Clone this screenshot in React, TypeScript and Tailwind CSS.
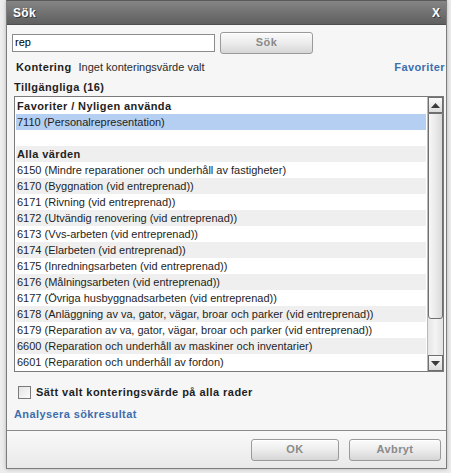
import React from "react";

const rows: { text: string; kind: "header" | "sel" | "empty" | "item"; bg: string }[] = [
  { text: "Favoriter / Nyligen använda", kind: "header", bg: "bg-white" },
  { text: "7110 (Personalrepresentation)", kind: "sel", bg: "bg-[#b4cff1]" },
  { text: "", kind: "empty", bg: "bg-white" },
  { text: "Alla värden", kind: "header", bg: "bg-[#efefef]" },
  { text: "6150 (Mindre reparationer och underhåll av fastigheter)", kind: "item", bg: "bg-white" },
  { text: "6170 (Byggnation (vid entreprenad))", kind: "item", bg: "bg-[#efefef]" },
  { text: "6171 (Rivning (vid entreprenad))", kind: "item", bg: "bg-white" },
  { text: "6172 (Utvändig renovering (vid entreprenad))", kind: "item", bg: "bg-[#efefef]" },
  { text: "6173 (Vvs-arbeten (vid entreprenad))", kind: "item", bg: "bg-white" },
  { text: "6174 (Elarbeten (vid entreprenad))", kind: "item", bg: "bg-[#efefef]" },
  { text: "6175 (Inredningsarbeten (vid entreprenad))", kind: "item", bg: "bg-white" },
  { text: "6176 (Målningsarbeten (vid entreprenad))", kind: "item", bg: "bg-[#efefef]" },
  { text: "6177 (Övriga husbyggnadsarbeten (vid entreprenad))", kind: "item", bg: "bg-white" },
  { text: "6178 (Anläggning av va, gator, vägar, broar och parker (vid entreprenad))", kind: "item", bg: "bg-[#efefef]" },
  { text: "6179 (Reparation av va, gator, vägar, broar och parker (vid entreprenad))", kind: "item", bg: "bg-white" },
  { text: "6600 (Reparation och underhåll av maskiner och inventarier)", kind: "item", bg: "bg-[#efefef]" },
  { text: "6601 (Reparation och underhåll av fordon)", kind: "item", bg: "bg-white" },
];

function Btn({ label, w }: { label: string; w: string }) {
  return (
    <div
      className={`${w} h-[22px] flex items-center justify-center rounded-[3px] border border-[#9a9a9a] bg-gradient-to-b from-[#fbfbfb] via-[#ececec] to-[#d6d6d6] text-[11px] font-bold tracking-[0.4px] text-[#8a8a8a] shadow-[inset_0_1px_0_#ffffff]`}
    >
      {label}
    </div>
  );
}

export default function App() {
  return (
    <div
      className="w-[451px] h-[473px] bg-[#ededed] pl-[6px] overflow-hidden"
      style={{ fontFamily: '"Liberation Sans", Arial, sans-serif' }}
    >
      <div className="w-[441px] h-[469px] border border-[#7d7d7d] border-t-[#5a5a5a] bg-[#f6f6f6] flex flex-col shadow-[0_0_4px_rgba(0,0,0,0.25)]">
        {/* Title bar */}
        <div className="h-[24px] shrink-0 flex items-center justify-between pl-[6px] pr-[6px] bg-gradient-to-b from-[#858585] to-[#5f5f5f] border-b border-[#4e4e4e]">
          <span className="text-[12px] font-bold tracking-[0.3px] text-white [text-shadow:1px_1px_0_#3a3a3a]">Sök</span>
          <span className="text-[12px] font-bold text-white [text-shadow:1px_1px_0_#3a3a3a]">X</span>
        </div>

        {/* Search row */}
        <div className="flex items-center pl-[5px] mt-[7px] h-[21px]">
          <div className="w-[203px] h-[18px] border border-[#8c8c8c] bg-white flex items-center pl-[2px] text-[11px] text-black">
            rep
          </div>
          <div className="ml-[5px]">
            <Btn label="Sök" w="w-[93px]" />
          </div>
        </div>

        {/* Kontering row */}
        <div className="flex items-center justify-between pl-[9px] pr-[1px] mt-[6px] h-[16px] text-[11px]">
          <div className="flex items-center">
            <span className="font-bold tracking-[0.4px] text-[#1e1e1e]">Kontering</span>
            <span className="ml-[7px] text-[#2a2a2a]">Inget konteringsvärde valt</span>
          </div>
          <span className="font-bold tracking-[0.4px] text-[#3d6eae]">Favoriter</span>
        </div>

        {/* Tillgängliga */}
        <div className="pl-[7px] mt-[5px] h-[15px] flex items-center text-[11px] font-bold tracking-[0.4px] text-[#1e1e1e]">
          Tillgängliga (16)
        </div>

        {/* List */}
        <div className="ml-[7px] mr-[2px] mt-[1px] h-[276px] border border-[#7a7a7a] bg-white flex">
          <div className="flex-1 flex flex-col pt-[1px] pl-[1px] pr-[1px]">
            {rows.map((r, i) => (
              <div
                key={i}
                className={`h-[16px] shrink-0 flex items-center pl-[1px] text-[11px] whitespace-nowrap ${r.bg} ${
                  r.kind === "header" ? "font-bold tracking-[0.4px] text-[#1e1e1e]" : "text-[#1e1e1e]"
                }`}
              >
                {r.text}
              </div>
            ))}
          </div>
          {/* Scrollbar */}
          <div className="w-[16px] shrink-0 flex flex-col border-l border-[#b9b9b9] bg-gradient-to-r from-[#e6e6e6] via-[#f4f4f4] to-[#e2e2e2]">
            <div className="h-[16px] shrink-0 border border-[#6f6f6f] bg-gradient-to-b from-[#fafafa] to-[#dcdcdc] flex items-center justify-center">
              <svg width="9" height="5" viewBox="0 0 9 5">
                <path d="M0 5 L4.5 0 L9 5 Z" fill="#3a3a3a" />
              </svg>
            </div>
            <div className="h-[206px] shrink-0 border border-[#6f6f6f] rounded-b-[3px] bg-gradient-to-r from-[#f7f7f7] via-[#eaeaea] to-[#d9d9d9]" />
            <div className="flex-1" />
            <div className="h-[16px] shrink-0 border border-[#6f6f6f] bg-gradient-to-b from-[#fafafa] to-[#dcdcdc] flex items-center justify-center">
              <svg width="9" height="5" viewBox="0 0 9 5">
                <path d="M0 0 L4.5 5 L9 0 Z" fill="#3a3a3a" />
              </svg>
            </div>
          </div>
        </div>

        {/* Checkbox row */}
        <div className="flex items-center pl-[11px] mt-[12px] h-[16px]">
          <div className="w-[13px] h-[13px] border border-[#7a7a7a] bg-gradient-to-br from-[#e4e4e4] to-[#fbfbfb]" />
          <span className="ml-[5px] text-[11px] font-bold tracking-[0.45px] text-[#1e1e1e]">Sätt valt konteringsvärde på alla rader</span>
        </div>

        {/* Analysera */}
        <div className="pl-[7px] mt-[6px] h-[16px] flex items-center text-[11px] font-bold tracking-[0.4px] text-[#3d6eae]">
          Analysera sökresultat
        </div>

        <div className="flex-1" />

        {/* Footer */}
        <div className="h-[38px] shrink-0 border-t border-[#8a8a8a] bg-gradient-to-b from-[#f9f9f9] to-[#e9e9e9] flex items-center justify-end pr-[5px] gap-[10px]">
          <Btn label="OK" w="w-[88px]" />
          <Btn label="Avbryt" w="w-[92px]" />
        </div>
      </div>
    </div>
  );
}
